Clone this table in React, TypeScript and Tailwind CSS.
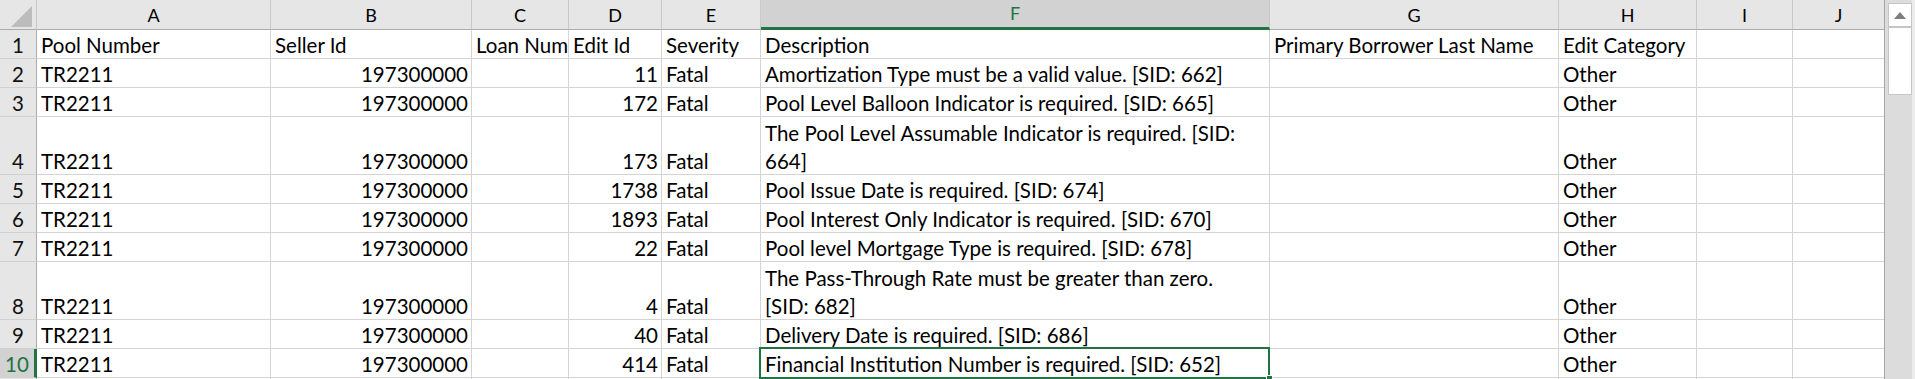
import React from "react";

type Row = {
  n: number;
  tall?: boolean;
  a: string;
  b: string;
  d: string;
  e: string;
  f: string[];
  h: string;
};

const rows: Row[] = [
  { n: 2, a: "TR2211", b: "197300000", d: "11", e: "Fatal", f: ["Amortization Type must be a valid value. [SID: 662]"], h: "Other" },
  { n: 3, a: "TR2211", b: "197300000", d: "172", e: "Fatal", f: ["Pool Level Balloon Indicator is required. [SID: 665]"], h: "Other" },
  { n: 4, tall: true, a: "TR2211", b: "197300000", d: "173", e: "Fatal", f: ["The Pool Level Assumable Indicator is required. [SID:", "664]"], h: "Other" },
  { n: 5, a: "TR2211", b: "197300000", d: "1738", e: "Fatal", f: ["Pool Issue Date is required. [SID: 674]"], h: "Other" },
  { n: 6, a: "TR2211", b: "197300000", d: "1893", e: "Fatal", f: ["Pool Interest Only Indicator is required. [SID: 670]"], h: "Other" },
  { n: 7, a: "TR2211", b: "197300000", d: "22", e: "Fatal", f: ["Pool level Mortgage Type is required. [SID: 678]"], h: "Other" },
  { n: 8, tall: true, a: "TR2211", b: "197300000", d: "4", e: "Fatal", f: ["The Pass-Through Rate must be greater than zero.", "[SID: 682]"], h: "Other" },
  { n: 9, a: "TR2211", b: "197300000", d: "40", e: "Fatal", f: ["Delivery Date is required. [SID: 686]"], h: "Other" },
  { n: 10, a: "TR2211", b: "197300000", d: "414", e: "Fatal", f: ["Financial Institution Number is required. [SID: 652]"], h: "Other" },
];

const cellBase =
  "flex items-end overflow-hidden whitespace-nowrap border-r border-b border-[#d4d4d4] pb-[1px] leading-[24px]";

function Cell({
  w,
  children,
  right,
  last,
}: {
  w: string;
  children?: React.ReactNode;
  right?: boolean;
  last?: boolean;
}) {
  return (
    <div
      className={`${cellBase} ${w} ${right ? "justify-end pr-[3px]" : "pl-[4px]"} ${last ? "border-r-0" : ""} shrink-0`}
    >
      {children}
    </div>
  );
}

function ColHead({ w, label, sel, last }: { w: string; label: string; sel?: boolean; last?: boolean }) {
  return (
    <div
      className={`${w} shrink-0 flex items-end justify-center pb-[3px] leading-[22px] text-[18px] ${
        last ? "" : "border-r border-[#c8c8c8]"
      } ${sel ? "bg-[#d2d2d2] text-[#217346] border-b-[3px] border-b-[#217346]" : "bg-[#e6e6e6] text-black border-b border-b-[#ababab]"}`}
    >
      {label}
    </div>
  );
}

function RowHead({ n, sel }: { n?: number; sel?: boolean }) {
  return (
    <div
      className={`w-[37px] shrink-0 flex items-end justify-center pb-[1px] leading-[24px] border-b border-[#d0d0d0] ${
        sel
          ? "bg-[#d2d2d2] text-[#217346] border-r-[3px] border-r-[#217346]"
          : "bg-[#e6e6e6] text-[#111] border-r border-r-[#ababab]"
      }`}
    >
      {n}
    </div>
  );
}

export default function App() {
  return (
    <div
      className="flex w-[1915px] h-[379px] overflow-hidden bg-white text-black text-[20.5px]"
      style={{ fontFamily: "Lato, 'Open Sans', sans-serif" }}
    >
      <div className="flex flex-col w-[1884px] shrink-0">
        {/* column header */}
        <div className="flex h-[30px] shrink-0">
          <div className="w-[37px] shrink-0 bg-[#e6e6e6] border-r border-[#c8c8c8] border-b border-b-[#ababab] flex items-end justify-end pr-[3px] pb-[2px]">
            <svg width="22" height="21" viewBox="0 0 22 21">
              <polygon points="21,0 21,21 0,21" fill="#bcbcbc" />
            </svg>
          </div>
          <ColHead w="w-[234px]" label="A" />
          <ColHead w="w-[201px]" label="B" />
          <ColHead w="w-[97px]" label="C" />
          <ColHead w="w-[93px]" label="D" />
          <ColHead w="w-[99px]" label="E" />
          <ColHead w="w-[509px]" label="F" sel />
          <ColHead w="w-[289px]" label="G" />
          <ColHead w="w-[138px]" label="H" />
          <ColHead w="w-[96px]" label="I" />
          <ColHead w="w-[91px]" label="J" last />
        </div>

        {/* header data row */}
        <div className="flex h-[29px] shrink-0">
          <RowHead n={1} />
          <Cell w="w-[234px]">Pool Number</Cell>
          <Cell w="w-[201px]">Seller Id</Cell>
          <Cell w="w-[97px]">Loan Num</Cell>
          <Cell w="w-[93px]">Edit Id</Cell>
          <Cell w="w-[99px]">Severity</Cell>
          <Cell w="w-[509px]">Description</Cell>
          <Cell w="w-[289px]">Primary Borrower Last Name</Cell>
          <Cell w="w-[138px]">Edit Category</Cell>
          <Cell w="w-[96px]" />
          <Cell w="w-[91px]" last />
        </div>

        {rows.map((r) => {
          const sel = r.n === 10;
          return (
            <div key={r.n} className={`flex shrink-0 ${r.tall ? "h-[58px]" : "h-[29px]"}`}>
              <RowHead n={r.n} sel={sel} />
              <Cell w="w-[234px]">{r.a}</Cell>
              <Cell w="w-[201px]" right>
                {r.b}
              </Cell>
              <Cell w="w-[97px]" />
              <Cell w="w-[93px]" right>
                {r.d}
              </Cell>
              <Cell w="w-[99px]">{r.e}</Cell>
              <div className={`${cellBase} w-[509px] pl-[4px] shrink-0 relative overflow-visible`}>
                <div className="flex flex-col gap-[4px]">
                  {r.f.map((t, i) => (
                    <span key={i}>{t}</span>
                  ))}
                </div>
                {sel && (
                  <>
                    <div className="absolute -top-[2px] -left-[2px] -right-[1px] -bottom-[2px] border-2 border-[#217346] pointer-events-none" />
                    <div className="absolute -right-[4px] -bottom-[5px] w-[7px] h-[7px] bg-[#217346] border border-white" />
                  </>
                )}
              </div>
              <Cell w="w-[289px]" />
              <Cell w="w-[138px]">{r.h}</Cell>
              <Cell w="w-[96px]" />
              <Cell w="w-[91px]" last />
            </div>
          );
        })}

        <div className="flex h-[29px] shrink-0">
          <RowHead />
          <Cell w="w-[234px]" />
          <Cell w="w-[201px]" />
          <Cell w="w-[97px]" />
          <Cell w="w-[93px]" />
          <Cell w="w-[99px]" />
          <Cell w="w-[509px]" />
          <Cell w="w-[289px]" />
          <Cell w="w-[138px]" />
          <Cell w="w-[96px]" />
          <Cell w="w-[91px]" last />
        </div>
      </div>

      {/* vertical scrollbar */}
      <div className="w-[31px] h-[379px] shrink-0 border-l border-[#a6a6a6] border-r-[3px] border-r-[#ececec] bg-[#dcdcdc] flex flex-col pl-[3px] pt-[3px]">
        <div className="w-[24px] h-[24px] bg-white border border-[#c6c6c6] flex items-center justify-center">
          <svg width="12" height="7" viewBox="0 0 12 7">
            <polygon points="6,0 12,7 0,7" fill="#7f7f7f" />
          </svg>
        </div>
        <div className="w-[24px] h-[68px] bg-white border border-[#c6c6c6]" />
      </div>
    </div>
  );
}
